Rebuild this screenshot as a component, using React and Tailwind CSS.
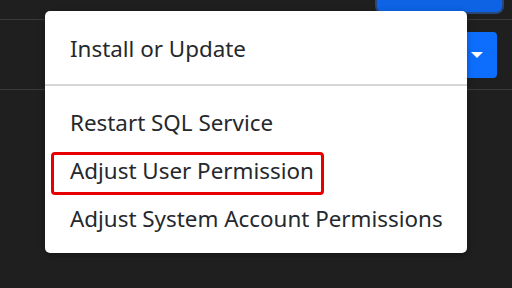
import React from "react";

export default function App() {
  return (
    <div
      className="relative w-[512px] h-[288px] overflow-hidden bg-[#1f1f1f]"
      style={{ fontFamily: '"Noto Sans", "Open Sans", sans-serif' }}
    >
      {/* top bar */}
      <div className="h-[20px] border-b border-[#3a3a3a] flex justify-end pr-[10px]">
        <div className="w-[125px] h-[12px] rounded-b-[6px] bg-[#0d63e3] ring-[2px] ring-[#27487a]" />
      </div>
      {/* row with split button */}
      <div className="h-[70px] border-b border-[#3a3a3a] flex justify-end items-center pr-[15px]">
        <div className="w-[40px] h-[46px] rounded-[4px] bg-[#0d6efd] flex items-center justify-end pr-[14px]">
          <div className="w-0 h-0 border-l-[6px] border-r-[6px] border-t-[6px] border-l-transparent border-r-transparent border-t-white" />
        </div>
      </div>

      {/* dropdown menu */}
      <div className="absolute left-[45px] top-[11px] w-[422px] h-[242px] bg-white rounded-[5px] shadow-[0_2px_6px_rgba(0,0,0,0.3)] text-[#25282c] text-[22.4px] pt-[14px] whitespace-nowrap">
        <div className="px-[25px] h-[48px] leading-[48px]">Install or Update</div>
        <div className="mt-[11px] border-t-2 border-[#d6d6d6]" />
        <div className="mt-[13px] flex flex-col">
          <div className="px-[25px] h-[48px] leading-[48px]">Restart SQL Service</div>
          <div className="relative px-[25px] h-[48px] leading-[48px]">
            Adjust User Permission
            <div className="absolute left-[6px] top-[5px] w-[273px] h-[43px] border-[3px] border-[#e80000] rounded-[4px]" />
          </div>
          <div className="px-[25px] h-[48px] leading-[48px]">Adjust System Account Permissions</div>
        </div>
      </div>
    </div>
  );
}
